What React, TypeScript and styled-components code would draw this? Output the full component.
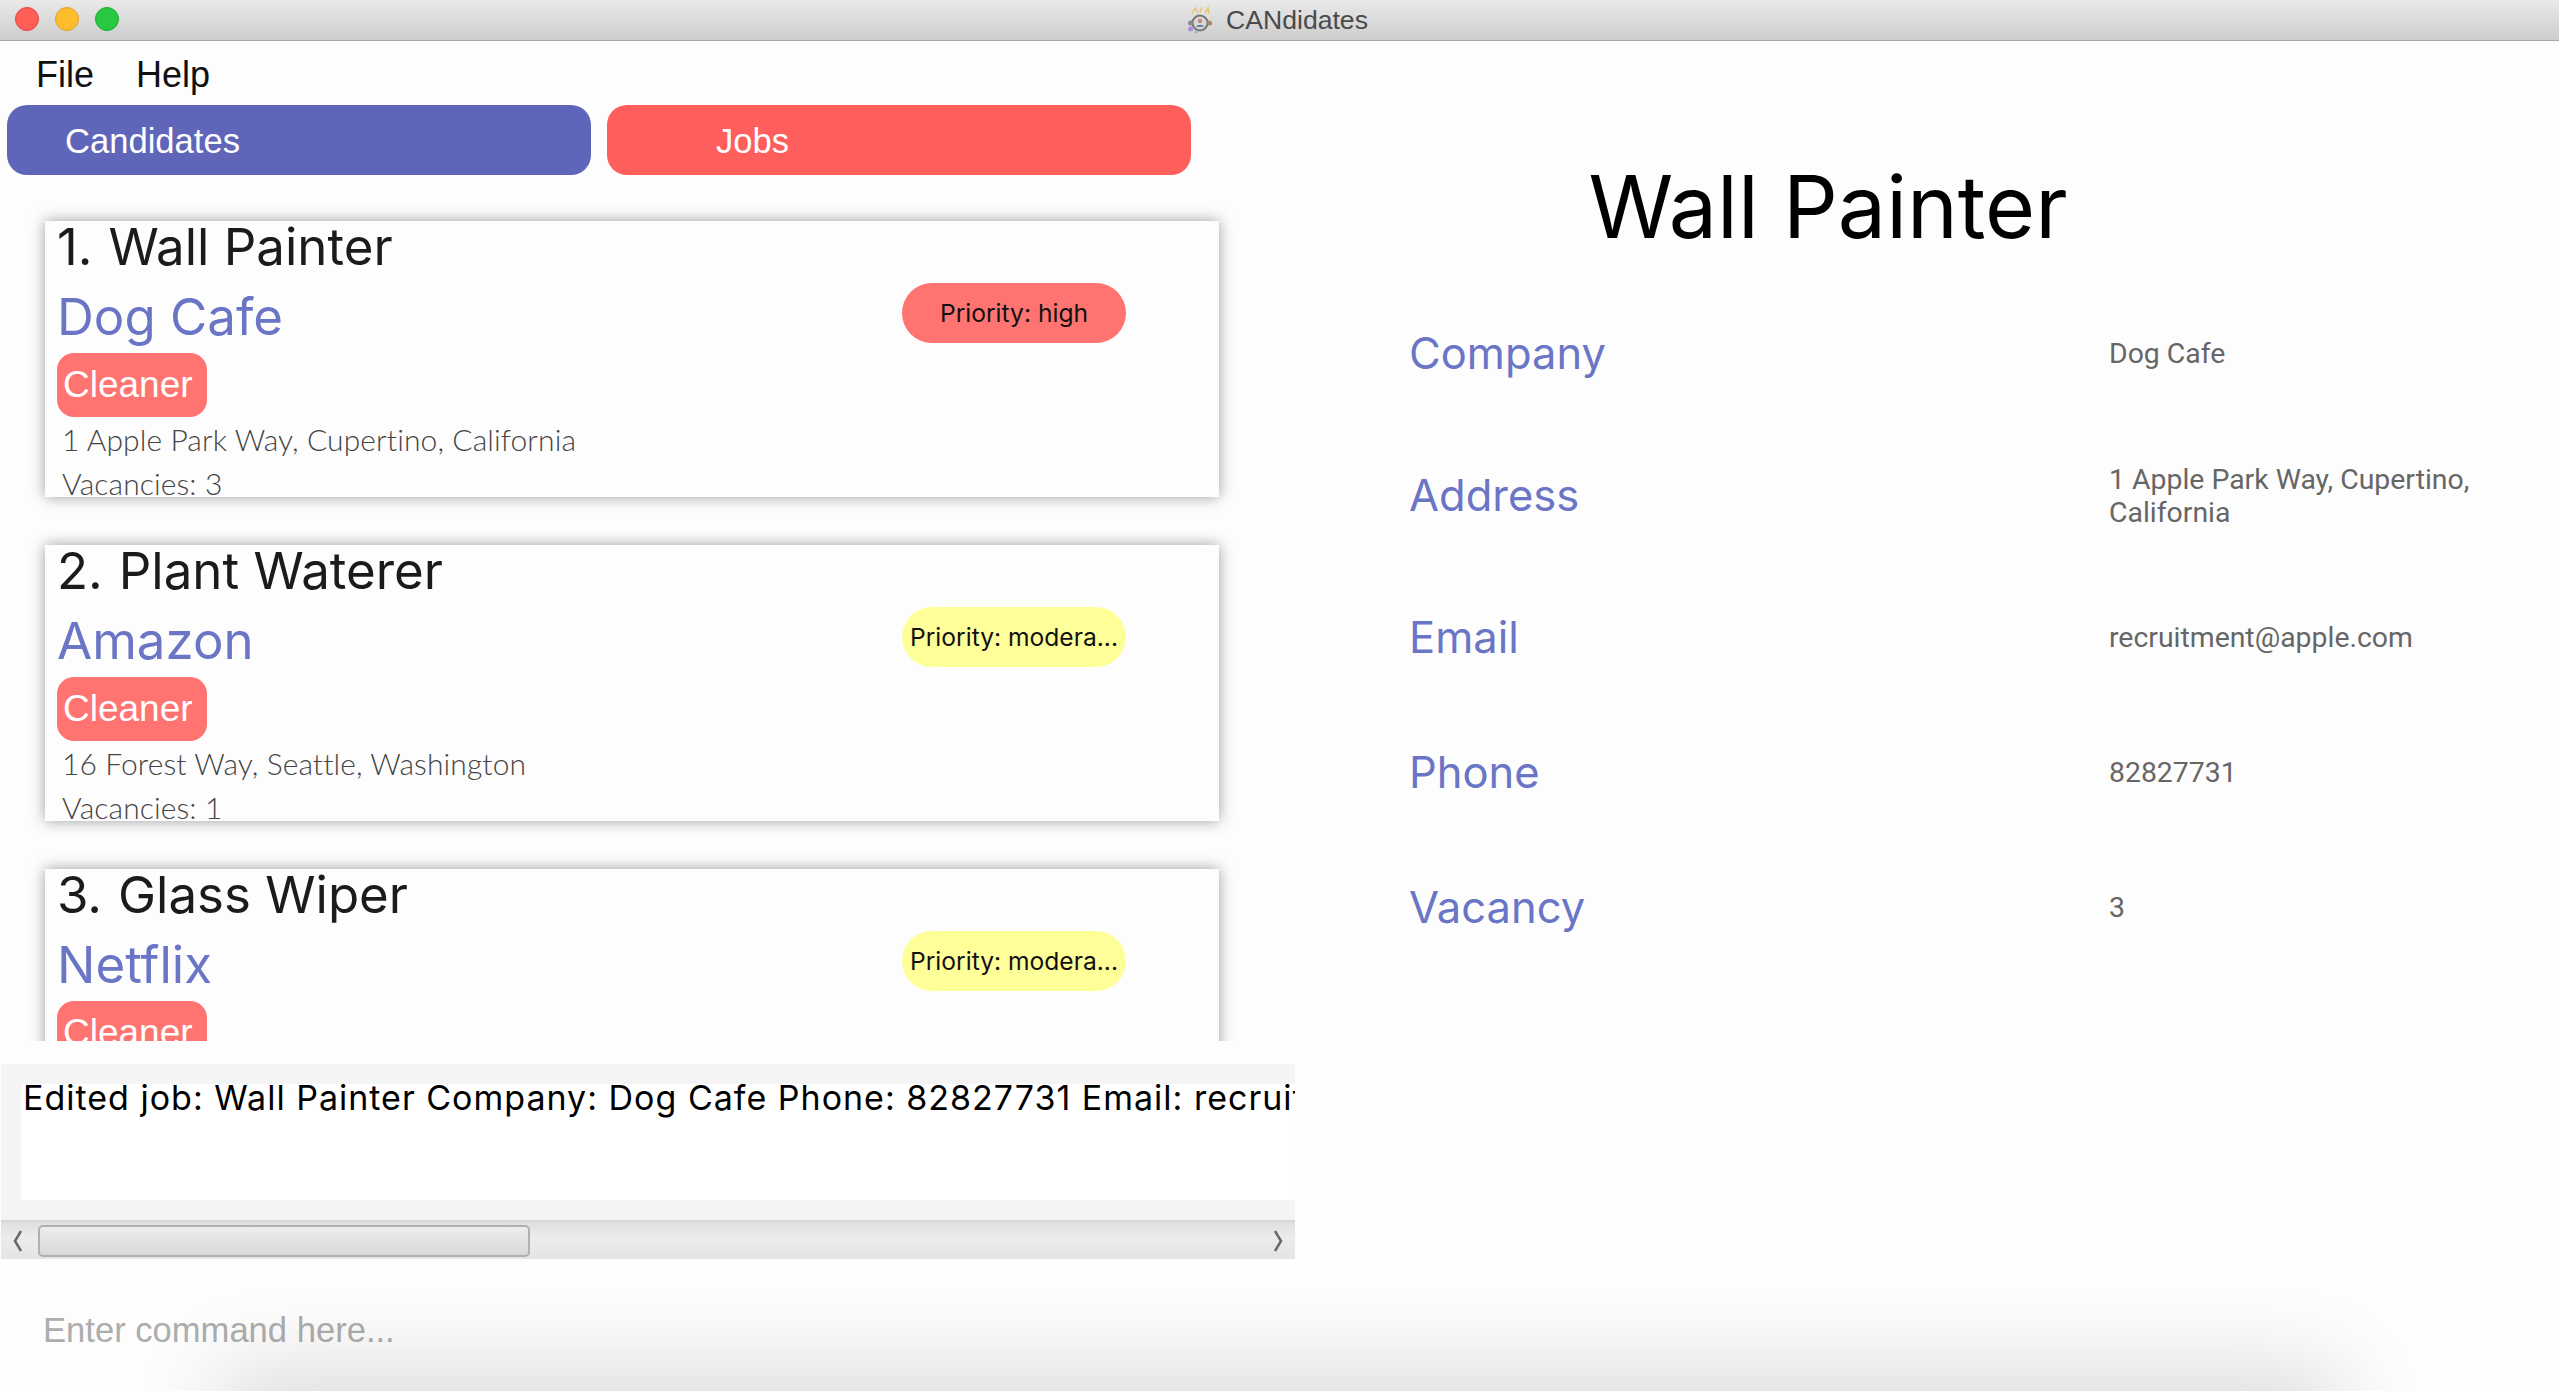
import React from "react";
import styled, { createGlobalStyle } from "styled-components";

const Global = createGlobalStyle`
  html, body { margin: 0; padding: 0; background: #fdfdfd; overflow: hidden; }
  * { box-sizing: border-box; }
`;
const SANS = `"Liberation Sans", Arial, sans-serif`;
const GEO = `Inter, "Noto Sans", sans-serif`;
const INDIGO = "#6a75c6";
const CORAL = "#ff7370";

const Window = styled.div`
  position: relative;
  width: 2559px;
  height: 1391px;
  overflow: hidden;
  display: flex;
  flex-direction: column;
  background: #fdfdfd;
`;
const TitleBar = styled.header`
  height: 41px;
  flex: none;
  position: relative;
  display: flex;
  align-items: center;
  justify-content: center;
  gap: 13px;
  padding-right: 4px;
  background: linear-gradient(#e9e9e9, #cdcdcd);
  border-bottom: 1px solid #a9a9a9;
  font: 26.6px ${SANS};
  color: #4a4a4a;
`;
const Lights = styled.div`
  position: absolute;
  left: 15px;
  top: 7px;
  display: flex;
  gap: 16px;
`;
const Light = styled.span<{ $c: string; $b: string }>`
  width: 24px;
  height: 24px;
  border-radius: 50%;
  background: ${(p) => p.$c};
  border: 1px solid ${(p) => p.$b};
`;
const Main = styled.div`
  flex: 1;
  display: flex;
  min-height: 0;
`;
const Left = styled.section`
  width: 1296px;
  flex: none;
  display: flex;
  flex-direction: column;
`;
const MenuBar = styled.nav`
  height: 64px;
  flex: none;
  display: flex;
  align-items: center;
  gap: 42px;
  padding: 3px 0 0 36px;
  font: 36px ${SANS};
  color: #111;
`;
const Tabs = styled.div`
  display: flex;
  flex: none;
  gap: 16px;
  padding-left: 7px;
`;
const Tab = styled.button<{ $bg: string; $pad: number }>`
  width: 584px;
  height: 70px;
  border: 0;
  border-radius: 20px;
  background: ${(p) => p.$bg};
  color: #fff;
  font: 34.6px ${SANS};
  text-align: left;
  padding: 3px 0 0 ${(p) => p.$pad}px;
`;
const List = styled.div`
  height: 866px;
  flex: none;
  overflow: hidden;
  display: flex;
  flex-direction: column;
  gap: 48px;
  padding: 46px 0 0 45px;
`;
const Card = styled.article`
  width: 1174px;
  height: 276px;
  flex: none;
  display: flex;
  padding: 0 0 0 12px;
  background: #fdfdfd;
  box-shadow: 0 0 14px rgba(0, 0, 0, 0.38);
`;
const CardBody = styled.div`
  display: flex;
  flex-direction: column;
  align-items: flex-start;
  flex: 1;
  overflow: hidden;
  height: 100%;
`;
const CardTitle = styled.h2`
  margin: 1px 0 0;
  font: 400 51px/50px ${GEO};
  color: #1b1b1b;
  white-space: nowrap;
`;
const CardIndex = styled.span`
  margin-right: 16px;
`;
const CardCompany = styled.div`
  margin-top: 20px;
  font: 400 51px/50px ${GEO};
  color: ${INDIGO};
`;
const Tag = styled.span`
  margin-top: 11px;
  height: 64px;
  padding: 0 14px 0 6px;
  flex: none;
  display: flex;
  align-items: center;
  border-radius: 17px;
  background: ${CORAL};
  color: #fff;
  font: 37px ${SANS};
`;
const CardLine = styled.div<{ $top: number }>`
  margin: ${(p) => p.$top}px 0 0 5px;
  font: 300 30px/32px Lato, ${GEO};
  letter-spacing: 0.1px;
  color: #444;
  white-space: nowrap;
`;
const Pill = styled.div<{ $bg: string }>`
  width: 224px;
  height: 60px;
  flex: none;
  margin: 62px 93px 0 0;
  display: flex;
  align-items: center;
  justify-content: center;
  border-radius: 30px;
  background: ${(p) => p.$bg};
  color: #111;
  font: 400 24.6px ${GEO};
  white-space: nowrap;
`;
const Result = styled.div`
  margin-top: 23px;
  height: 195px;
  flex: none;
  margin-left: 1px;
  width: 1294px;
  background: #f4f4f4;
  display: flex;
  flex-direction: column;
`;
const ResultBox = styled.div`
  margin: 20px 0 0 20px;
  height: 116px;
  flex: none;
  overflow: hidden;
  background: #fff;
  border-radius: 4px 0 0 4px;
  font: 400 34px/28px ${GEO};
  letter-spacing: 1px;
  color: #000;
  white-space: nowrap;
  padding: 0 0 0 2px;
`;
const ScrollBar = styled.div`
  margin-top: 20px;
  height: 39px;
  flex: none;
  display: flex;
  align-items: center;
  border-top: 2px solid #d6d6d6;
  background: linear-gradient(#dfdfdf, #ececec 40%, #e4e4e4);
`;
const Thumb = styled.div`
  width: 492px;
  height: 32px;
  margin-left: 13px;
  border: 2px solid #b0b0b0;
  border-radius: 5px;
  background: linear-gradient(#eeeeee, #d8d8d8);
`;
const Arrow = styled.svg`
  flex: none;
  width: 14px;
  height: 24px;
  margin-left: 10px;
  fill: none;
  stroke: #6a6a6a;
  stroke-width: 2.5;
`;
const ArrowRight = styled(Arrow)`
  margin-left: auto;
  margin-right: 10px;
`;
const Command = styled.div`
  flex: 1;
  display: flex;
  align-items: center;
  padding: 11px 0 0 43px;
  font: 34.6px ${SANS};
  color: #adadad;
`;
const Right = styled.section`
  flex: 1;
  display: flex;
  flex-direction: column;
  padding-left: 113px;
`;
const DetailTitle = styled.h1`
  margin: 121px 0 0;
  width: 838px;
  text-align: center;
  font: 400 86px/90px ${GEO};
  color: #000;
`;
const Details = styled.dl`
  margin: 34px 0 0;
  display: grid;
  grid-template-columns: 700px 400px;
  grid-template-rows: 135px 149px 135px 135px 135px;
`;
const Label = styled.dt`
  display: flex;
  align-items: center;
  padding-bottom: 2px;
  font: 400 43.5px/60px ${GEO};
  color: ${INDIGO};
`;
const Value = styled.dd`
  margin: 0;
  display: flex;
  align-items: center;
  font: 400 28.4px/33px Roboto, ${GEO};
  color: #666;
`;
const BottomShade = styled.div`
  position: absolute;
  left: 240px;
  right: 240px;
  bottom: -70px;
  height: 70px;
  box-shadow: 0 0 90px 20px rgba(0, 0, 0, 0.14);
  pointer-events: none;
`;

const Logo = () => (
  <svg width="26" height="28" viewBox="0 0 26 28" aria-hidden="true">
    <path d="M5 8 L8 2 L11 7 M13 6 L15 1 M18 7 L21 2 L22 8" fill="none" stroke="#e8c877" strokeWidth="1.6" />
    <circle cx="13" cy="17" r="7.5" fill="#d9d9d9" stroke="#777" strokeWidth="2" />
    <circle cx="13" cy="15" r="2.2" fill="#c98a7a" />
    <path d="M9 21c1-3 7-3 8 0" fill="#6f7fa8" />
    <circle cx="3.5" cy="17" r="2.5" fill="#8a8a8a" />
    <circle cx="22.5" cy="17" r="2.5" fill="#a88a6a" />
    <circle cx="3.5" cy="23" r="2.5" fill="#b08ad8" />
    <circle cx="9" cy="26" r="1.6" fill="#8ab8d8" />
  </svg>
);

const jobs = [
  { i: "1.", t: "Wall Painter", c: "Dog Cafe", a: "1 Apple Park Way, Cupertino, California", v: 3, p: "Priority: high", bg: CORAL },
  { i: "2.", t: "Plant Waterer", c: "Amazon", a: "16 Forest Way, Seattle, Washington", v: 1, p: "Priority: modera...", bg: "#ffff99" },
  { i: "3.", t: "Glass Wiper", c: "Netflix", a: "3 Netflix Way, Los Gatos, California", v: 2, p: "Priority: modera...", bg: "#ffff99" },
];
const details: [string, string][] = [
  ["Company", "Dog Cafe"],
  ["Address", "1 Apple Park Way, Cupertino, California"],
  ["Email", "recruitment@apple.com"],
  ["Phone", "82827731"],
  ["Vacancy", "3"],
];

export default function App() {
  return (
    <Window>
      <Global />
      <TitleBar>
        <Lights>
          <Light $c="#ff5f57" $b="#e0443e" />
          <Light $c="#ffbd2e" $b="#dea123" />
          <Light $c="#28c940" $b="#1aab29" />
        </Lights>
        <Logo />
        <span>CANdidates</span>
      </TitleBar>
      <Main>
        <Left>
          <MenuBar>
            <span>File</span>
            <span>Help</span>
          </MenuBar>
          <Tabs>
            <Tab $bg="#5f66b9" $pad={58}>Candidates</Tab>
            <Tab $bg="#ff5f5c" $pad={109}>Jobs</Tab>
          </Tabs>
          <List>
            {jobs.map((j) => (
              <Card key={j.t}>
                <CardBody>
                  <CardTitle><CardIndex>{j.i}</CardIndex>{j.t}</CardTitle>
                  <CardCompany>{j.c}</CardCompany>
                  <Tag>Cleaner</Tag>
                  <CardLine $top={6}>{j.a}</CardLine>
                  <CardLine $top={12}>Vacancies: {j.v}</CardLine>
                </CardBody>
                <Pill $bg={j.bg}>{j.p}</Pill>
              </Card>
            ))}
          </List>
          <Result>
            <ResultBox>Edited job: Wall Painter Company: Dog Cafe Phone: 82827731 Email: recruitment@apple.com Address: 1 Apple Park Way</ResultBox>
            <ScrollBar>
              <Arrow viewBox="0 0 14 24"><path d="M10 2 L4 12 L10 22" /></Arrow>
              <Thumb />
              <ArrowRight viewBox="0 0 14 24"><path d="M4 2 L10 12 L4 22" /></ArrowRight>
            </ScrollBar>
          </Result>
          <Command>Enter command here...</Command>
        </Left>
        <Right>
          <DetailTitle>Wall Painter</DetailTitle>
          <Details>
            {details.map(([k, v]) => (
              <React.Fragment key={k}>
                <Label>{k}</Label>
                <Value>{v}</Value>
              </React.Fragment>
            ))}
          </Details>
        </Right>
      </Main>
      <BottomShade />
    </Window>
  );
}
